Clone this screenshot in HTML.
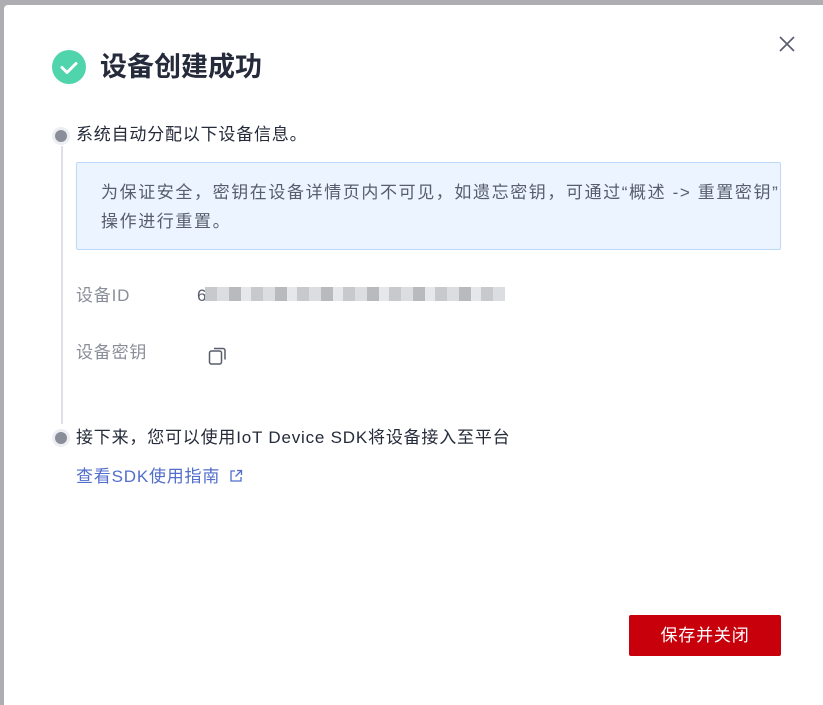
<!DOCTYPE html>
<html><head><meta charset="utf-8"><style>
*{margin:0;padding:0;box-sizing:border-box}
body{width:823px;height:700px;background:#aeaeb2;position:relative;overflow:hidden;font-family:"Liberation Sans","Noto Sans CJK SC",sans-serif}
.dlg{position:absolute;left:4px;top:5px;width:830px;height:700px;background:#fff;border-radius:4px 0 0 0}
.abs{position:absolute;white-space:nowrap}
.t{font-size:17px;letter-spacing:0.8px;color:#252b3a}
.dot{position:absolute;width:12px;height:12px;border-radius:50%;background:#8a8e99;box-shadow:0 0 0 3px #eceef2}
</style></head><body>
<div class="dlg"></div>
<svg class="abs" style="left:52px;top:50px" width="34" height="34" viewBox="0 0 34 34"><circle cx="17" cy="17" r="17" fill="#50d4ab"/><path d="M10 17.5l5 5 9-9" stroke="#fff" stroke-width="3" fill="none" stroke-linecap="round" stroke-linejoin="round"/></svg>
<div class="abs" style="left:100px;top:49px;font-size:27px;font-weight:bold;color:#252b3a;line-height:36px">设备创建成功</div>
<svg class="abs" style="left:778px;top:35px" width="18" height="18" viewBox="0 0 18 18"><path d="M2 2l14 14M16 2L2 16" stroke="#575d6c" stroke-width="1.6"/></svg>
<div class="dot" style="left:55px;top:130px"></div>
<div class="abs" style="left:61px;top:146px;width:2px;height:278px;background:#dfe1e6"></div>
<div class="abs t" style="left:76px;top:124px;line-height:22px">系统自动分配以下设备信息。</div>
<div class="abs" style="left:76px;top:162px;width:705px;height:88px;background:#ebf4ff;border:1px solid #bed9f7;border-radius:2px"></div>
<div class="abs" style="left:101px;top:178px;font-size:17px;letter-spacing:1.6px;color:#575d6c;line-height:29px">为保证安全，密钥在设备详情页内不可见，如遗忘密钥，可通过“概述 -&gt; 重置密钥”<br>操作进行重置。</div>
<div class="abs t" style="left:76px;top:285px;color:#8a8e99;line-height:22px">设备ID</div>
<div class="abs t" style="left:197px;top:285px;color:#575d6c;line-height:22px">6</div>
<div class="abs" style="left:205px;top:287px;width:300px;height:14px;background:repeating-linear-gradient(90deg,#c8c9cd 0 12px,#dcdde0 12px 24px,#b9babe 24px 36px,#e6e7ea 36px 46px)"></div>
<div class="abs t" style="left:76px;top:342px;color:#8a8e99;line-height:22px">设备密钥</div>
<svg class="abs" style="left:208px;top:346px" width="22" height="20" viewBox="0 0 22 20"><rect x="1.5" y="5" width="12" height="13" rx="2" fill="none" stroke="#575d6c" stroke-width="1.5"/><path d="M6 2.5h9a2 2 0 0 1 2 2v9" fill="none" stroke="#575d6c" stroke-width="1.5"/></svg>
<div class="dot" style="left:55px;top:432px"></div>
<div class="abs t" style="left:76px;top:427px;line-height:22px">接下来，您可以使用IoT Device SDK将设备接入至平台</div>
<div class="abs t" style="left:76px;top:466px;color:#526ecc;line-height:22px">查看SDK使用指南</div>
<svg class="abs" style="left:229px;top:469px" width="14" height="14" viewBox="0 0 14 14"><path d="M6 2H2v10h10V8M8 1.5h4.5V6M12.5 1.5L6.5 7.5" fill="none" stroke="#526ecc" stroke-width="1.3"/></svg>
<div class="abs" style="left:629px;top:615px;width:152px;height:41px;background:#c7000b;border-radius:2px;color:#fff;font-size:17px;letter-spacing:0.8px;line-height:41px;text-align:center">保存并关闭</div>
</body></html>
